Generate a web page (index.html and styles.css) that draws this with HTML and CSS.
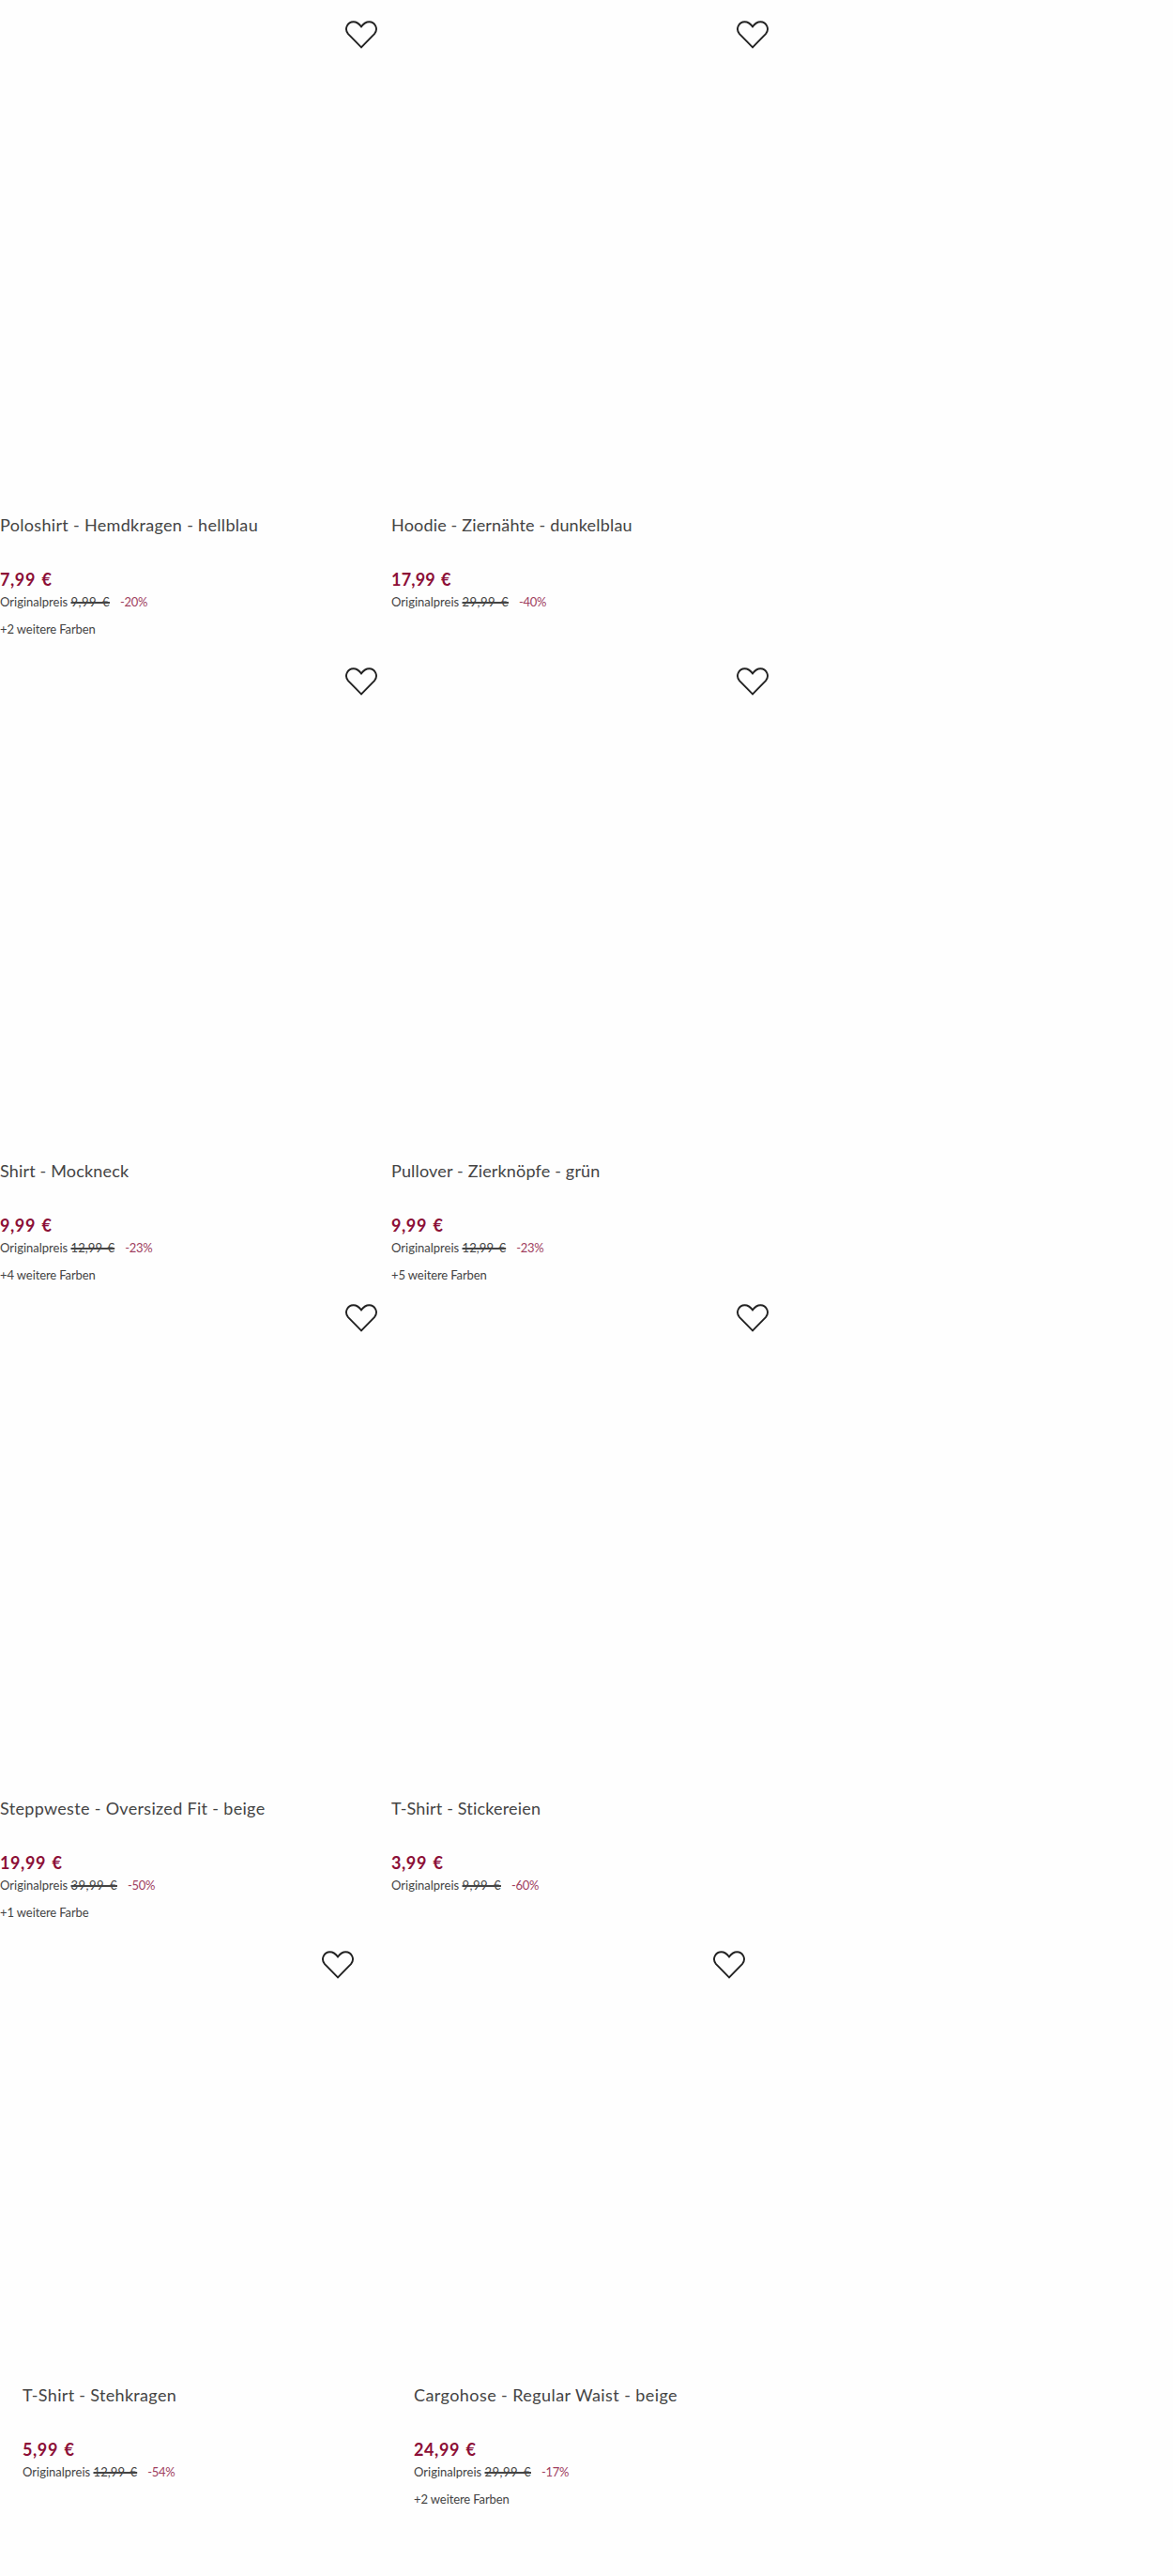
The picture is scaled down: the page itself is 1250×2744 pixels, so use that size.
FILE: index.html
```html
<!DOCTYPE html>
<html lang="de">
<head>
<meta charset="utf-8">
<title>Produkte</title>
<link rel="stylesheet" href="styles.css">
</head>
<body>
<svg width="0" height="0" class="defs"><symbol id="heart" viewBox="0 0 36 32"><path d="M18 29.300 4 15.200C-0.600 9.600 3.500 2.300 9.600 2.300c3.600 0 6 2 8.400 5.100 2.400-3.100 4.800-5.100 8.400-5.100 6.100 0 10.200 7.300 5.600 12.900Z"/></symbol></svg>
<main class="products">
<section class="row">
<article class="card"><div class="media"><button class="wish" aria-label="Merken"><svg><use href="#heart"/></svg></button></div><h2 class="title">Poloshirt - Hemdkragen - hellblau</h2><p class="price">7,99 €</p><p class="original">Originalpreis <s>9,99 €</s><span class="off">-20%</span></p><p class="colors">+2 weitere Farben</p></article>
<article class="card"><div class="media"><button class="wish" aria-label="Merken"><svg><use href="#heart"/></svg></button></div><h2 class="title tight">Hoodie - Ziernähte - dunkelblau</h2><p class="price narrow">17,99 €</p><p class="original">Originalpreis <s>29,99 €</s><span class="off">-40%</span></p></article>
</section>
<section class="row">
<article class="card"><div class="media"><button class="wish" aria-label="Merken"><svg><use href="#heart"/></svg></button></div><h2 class="title tight">Shirt - Mockneck</h2><p class="price">9,99 €</p><p class="original">Originalpreis <s class="narrow">12,99 €</s><span class="off">-23%</span></p><p class="colors">+4 weitere Farben</p></article>
<article class="card"><div class="media"><button class="wish" aria-label="Merken"><svg><use href="#heart"/></svg></button></div><h2 class="title tight">Pullover - Zierknöpfe - grün</h2><p class="price">9,99 €</p><p class="original">Originalpreis <s class="narrow">12,99 €</s><span class="off">-23%</span></p><p class="colors">+5 weitere Farben</p></article>
</section>
<section class="row">
<article class="card"><div class="media"><button class="wish" aria-label="Merken"><svg><use href="#heart"/></svg></button></div><h2 class="title">Steppweste - Oversized Fit - beige</h2><p class="price">19,99 €</p><p class="original">Originalpreis <s>39,99 €</s><span class="off">-50%</span></p><p class="colors">+1 weitere Farbe</p></article>
<article class="card"><div class="media"><button class="wish" aria-label="Merken"><svg><use href="#heart"/></svg></button></div><h2 class="title tight">T-Shirt - Stickereien</h2><p class="price">3,99 €</p><p class="original">Originalpreis <s>9,99 €</s><span class="off">-60%</span></p></article>
</section>
<section class="row inset">
<article class="card"><div class="media"><button class="wish" aria-label="Merken"><svg><use href="#heart"/></svg></button></div><h2 class="title">T-Shirt - Stehkragen</h2><p class="price">5,99 €</p><p class="original">Originalpreis <s class="narrow">12,99 €</s><span class="off">-54%</span></p></article>
<article class="card"><div class="media"><button class="wish" aria-label="Merken"><svg><use href="#heart"/></svg></button></div><h2 class="title loose">Cargohose - Regular Waist - beige</h2><p class="price">24,99 €</p><p class="original">Originalpreis <s>29,99 €</s><span class="off">-17%</span></p><p class="colors">+2 weitere Farben</p></article>
</section>
</main>
</body>
</html>
```
FILE: styles.css
```css
* { box-sizing: border-box; }
body { margin: 0; background: #fefefe; color: #444; font-family: Lato, sans-serif; }
.defs { display: block; }
.products { display: grid; grid-template-rows: 689px 678px 689px 688px; }
.row { display: grid; grid-template-columns: 417px 417px; }
.card { white-space: nowrap; }
.media { height: 545px; padding: 21px 14px 0 0; display: flex; justify-content: flex-end; align-items: flex-start; }
.wish { padding: 0; border: 0; background: none; }
.wish svg { display: block; width: 36px; height: 32px; fill: none; stroke: #222; stroke-width: 1.9; }
.title { margin: 0; font-size: 18px; line-height: 28px; font-weight: 400; letter-spacing: 0.32px; }
.title.tight { letter-spacing: 0.17px; }
.title.loose { letter-spacing: 0.42px; }
.price { margin: 31px 0 0; font-size: 18px; line-height: 26px; font-weight: 700; letter-spacing: 0.6px; word-spacing: 1.5px; color: #8c0f37; }
.price.narrow { letter-spacing: 0.2px; }
.original, .colors { margin: 0; font-size: 13px; line-height: 22px; }
.original s { letter-spacing: 0.5px; word-spacing: 2px; text-decoration-thickness: 1.5px; }
.original s.narrow { letter-spacing: 0.1px; }
.off { margin-left: 11px; letter-spacing: -0.3px; color: #a0405f; }
.colors { margin-top: 7px; letter-spacing: -0.1px; }
.row:nth-child(2) .media { height: 544px; }
.inset .card { padding-left: 24px; }
.inset .media { height: 481px; padding-right: 39px; }
```
